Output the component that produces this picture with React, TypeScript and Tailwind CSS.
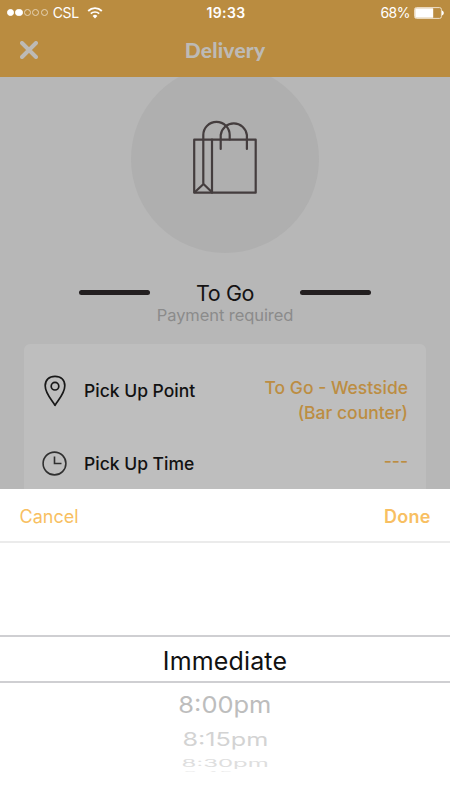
import { clsx } from 'clsx';
import type { ReactNode } from 'react';

type PickerOption = {
  label: string;
  rowClass: string;
  textClass: string;
};

const options: PickerOption[] = [
  {
    label: '8:00pm',
    rowClass: 'h-[43px]',
    textClass: 'text-[24px] scale-x-[1.06] scale-y-[0.97] text-[#bdbdbd]',
  },
  {
    label: '8:15pm',
    rowClass: 'h-[29px]',
    textClass: 'text-[22.5px] scale-x-[1.12] scale-y-[0.8] text-[#d3d3d3]',
  },
  {
    label: '8:30pm',
    rowClass: 'h-[15px]',
    textClass: 'text-[22px] scale-x-[1.09] scale-y-[0.46] text-[#dedede]',
  },
  {
    label: '8:45pm',
    rowClass: 'h-[7px]',
    textClass: 'text-[22px] scale-x-[1.05] scale-y-[0.25] text-[#ececec]',
  },
];

function StatusBar() {
  return (
    <div className="flex h-[25px] items-center justify-between pr-[6px] pl-[7px] text-white">
      <div className="flex w-[150px] items-center">
        <div className="flex gap-[1.2px]">
          {[true, true, false, false, false].map((filled, index) => (
            <span
              key={index}
              className={clsx(
                'size-[7.2px] rounded-full border',
                filled ? 'border-white bg-white' : 'border-[#e6d3b4]',
              )}
            />
          ))}
        </div>
        <span className="ml-[5px] text-[14px] leading-none tracking-[-0.3px]">CSL</span>
        <svg className="ml-2 h-3 w-4" viewBox="0 0 16 12" fill="none" stroke="white">
          <path d="M1.2 4a9.6 9.6 0 0 1 13.6 0" strokeWidth="1.8" />
          <path d="M3.8 6.7a6 6 0 0 1 8.4 0" strokeWidth="1.7" />
          <path d="M8 11.4 5.6 8.9a3.5 3.5 0 0 1 4.8 0z" fill="white" stroke="none" />
        </svg>
      </div>
      <span className="pl-px text-[14px] leading-none font-semibold tracking-[0.4px]">19:33</span>
      <div className="flex w-[150px] items-center justify-end">
        <span className="text-[14px] leading-none tracking-[-0.5px]">68%</span>
        <svg className="ml-1 h-3 w-[30px]" viewBox="0 0 30 12" fill="none">
          <rect x="0.6" y="0.6" width="26.8" height="10.8" rx="1.8" stroke="#efe1ca" />
          <rect x="1.2" y="1.2" width="18" height="9.6" rx="0.6" fill="white" />
          <path d="M28 3.6c2.4 .8 2.4 4 0 4.8z" fill="#fff" />
        </svg>
      </div>
    </div>
  );
}

function BagIcon() {
  return (
    <svg
      className="mb-[5px] h-[76px] w-[66px]"
      viewBox="0 0 66 76"
      fill="none"
      stroke="#443d3e"
      strokeWidth="2.2"
      strokeLinecap="round"
      strokeLinejoin="round"
    >
      <path d="M2.2 20.7h61.5v53H2.2z" />
      <path d="M20 20.7v53M2.7 73.2l8.8-8.2 8.5 8.2M11.3 65V16a13.2 13.2 0 0 1 26.4 0v4.5" />
      <path d="M28.7 30V16a13.2 13.2 0 0 1 26.2 0v14" />
    </svg>
  );
}

function PinIcon() {
  return (
    <svg className="h-8 w-6" viewBox="0 0 24 32" fill="none" stroke="#181818" strokeWidth="1.7">
      <path
        d="M12 30.3C9.8 26 2.2 19 2.2 10.8C2.2 5 6 1.3 12 1.3S21.8 5 21.8 10.8C21.8 19 14.2 26 12 30.3z"
        strokeLinejoin="round"
      />
      <circle cx="12" cy="11.2" r="3.8" />
    </svg>
  );
}

function ClockIcon() {
  return (
    <svg className="size-[25px]" viewBox="0 0 25 25" fill="none" stroke="#303030" strokeWidth="1.6">
      <circle cx="12.5" cy="12.5" r="11.4" />
      <path d="M12.5 5.5v7h7" />
    </svg>
  );
}

function DetailRow({
  icon,
  label,
  children,
}: {
  icon: ReactNode;
  label: string;
  children: ReactNode;
}) {
  return (
    <div className="flex items-start px-[18px] text-[17.5px] leading-[25px]">
      <div className="mt-[3px] flex h-[25px] w-[25px] shrink-0 items-center justify-center">
        {icon}
      </div>
      <span className="mt-[3px] ml-[17px] font-medium text-[#121212]">{label}</span>
      <span className="ml-auto text-right font-medium text-[#bc8d42]">{children}</span>
    </div>
  );
}

export default function App() {
  return (
    <div className="flex h-[800px] w-[450px] flex-col overflow-hidden bg-[#b7b7b7] font-['Inter','Liberation_Sans',sans-serif]">
      {/* Header */}
      <header className="z-10 h-[77px] shrink-0 bg-[#ba8c40]">
        <StatusBar />
        <div className="grid h-[50px] grid-cols-[60px_1fr_60px] items-center">
          <svg className="ml-5 size-[18px]" viewBox="0 0 18 18" stroke="#bdbab6" strokeWidth="4">
            <path d="M2 2l14 14M16 2L2 16" strokeLinecap="round" />
          </svg>
          <h1 className="text-center font-['Lato',sans-serif] text-[21px] font-black tracking-[0.2px] text-[#bdbab6]">
            Delivery
          </h1>
        </div>
      </header>

      {/* Order details */}
      <main className="flex h-[412px] shrink-0 flex-col overflow-hidden">
        <div className="-mt-3 ml-[131px] flex size-[188px] shrink-0 items-center justify-center rounded-full bg-[#afafaf]">
          <BagIcon />
        </div>
        <div className="mt-[25px] flex h-7 items-center justify-between px-[78.5px]">
          <span className="h-[5px] w-[71px] rounded-full bg-[#231f20]" />
          <h2 className="pt-0.5 text-[21.5px] tracking-[-0.4px] text-[#151313]">To Go</h2>
          <span className="h-[5px] w-[71px] rounded-full bg-[#231f20]" />
        </div>
        <p className="mt-px text-center text-[16.5px] leading-[17px] tracking-[-0.08px] text-[#8b8b8b]">
          Payment required
        </p>
        <section className="mx-6 mt-5 flex h-[180px] shrink-0 flex-col gap-[23px] rounded-t-[6px] bg-[#bebebe] pt-[31px]">
          <DetailRow icon={<PinIcon />} label="Pick Up Point">
            To Go - Westside
            <br />
            (Bar counter)
          </DetailRow>
          <DetailRow icon={<ClockIcon />} label="Pick Up Time">
            ---
          </DetailRow>
        </section>
      </main>

      {/* Time picker */}
      <section className="flex flex-1 flex-col bg-white">
        <div className="flex h-[54px] items-center justify-between border-b-2 border-[#ebebeb] px-[19.5px] pt-0.5 text-[18px] text-[#f8bf62]">
          <button>Cancel</button>
          <button className="font-semibold tracking-[0.2px]">Done</button>
        </div>
        <div className="mt-[92px] flex h-12 items-center justify-center border-y-2 border-[#cfcfd2] pt-1.5">
          <span className="text-[25px] tracking-[0.15px] text-[#111]">Immediate</span>
        </div>
        {/* The last option only peeks in at the wheel's lower edge */}
        <div className="flex h-[88.5px] flex-col overflow-hidden text-center">
          {options.map((option) => (
            <div
              key={option.label}
              className={clsx('flex shrink-0 items-center justify-center', option.rowClass)}
            >
              <span className={clsx('leading-none', option.textClass)}>{option.label}</span>
            </div>
          ))}
        </div>
      </section>
    </div>
  );
}
